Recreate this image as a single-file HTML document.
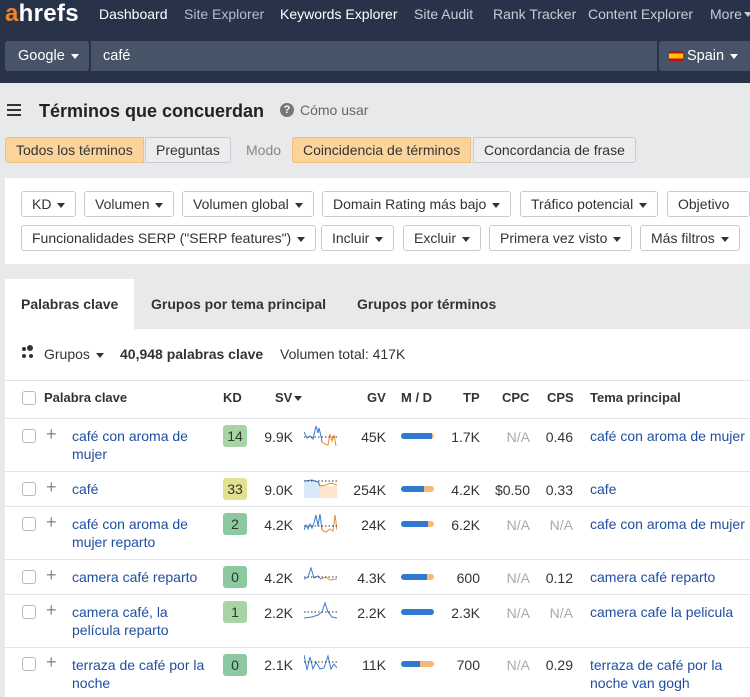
<!DOCTYPE html>
<html><head><meta charset="utf-8"><style>
*{box-sizing:border-box;margin:0;padding:0}
body{width:750px;height:697px;overflow:hidden;background:#e8e9eb;font-family:"Liberation Sans",Arial,sans-serif;font-size:14px;color:#333;position:relative}
.a{position:absolute;white-space:nowrap}
.nav{position:absolute;left:0;top:0;width:750px;height:83px;background:#283349}
.nav span{position:absolute;top:6px;font-size:14px;color:#fff}
.sb{position:absolute;top:41px;height:30px;background:#475366;border-radius:3px}
.btn{position:absolute;height:26px;border:1px solid #c9cbcf;border-radius:3px;background:#fff;font-size:14px;line-height:24px;padding:0 10px;color:#333}
.car{display:inline-block;width:0;height:0;border-left:4px solid transparent;border-right:4px solid transparent;border-top:5px solid #333;vertical-align:middle;margin-left:6px}
.seg{position:absolute;top:137px;height:26px;line-height:24px;border:1px solid #c9cbcf;padding:0 10px;font-size:14px}
.on{background:#fbd49c;border-color:#f0bf7a}
.off{background:#ececee}
.hl{position:absolute;left:5px;width:745px;height:1px;background:#e3e4e6}
.cb{position:absolute;left:22px;width:14px;height:14px;border:1px solid #bbb;border-radius:3px;background:#fff}
.pl{position:absolute;left:46px;font-size:18px;color:#888;font-weight:300}
.kw{position:absolute;left:72px;color:#1f4fa0;font-size:14px;line-height:18px}
.kd{position:absolute;left:223px;width:24px;height:22px;border-radius:3px;text-align:center;line-height:22px;font-size:14px}
.n{position:absolute;font-size:14px;text-align:right}
.md{position:absolute;left:401px;width:33px;height:6px;border-radius:3px;background:#f7b97a;overflow:hidden}
.md i{display:block;height:6px;background:#2f79d0}
.na{color:#aaa}
.h{font-weight:bold;font-size:13px;position:absolute;top:390px}
</style></head><body>
<div class="nav">
<span style="left:5px;top:0px;font-size:24px;font-weight:bold;letter-spacing:0.3px"><span style="position:static;color:#f58220;font-size:24px">a</span>hrefs</span>
<span style="left:99px">Dashboard</span>
<span style="left:184px;color:#b7bdc8">Site Explorer</span>
<span style="left:280px">Keywords Explorer</span>
<span style="left:414px;color:#c8ccd4">Site Audit</span>
<span style="left:493px;color:#c8ccd4">Rank Tracker</span>
<span style="left:588px;color:#c8ccd4">Content Explorer</span>
<span style="left:710px;color:#c8ccd4">More <span class="car" style="border-top-color:#c8ccd4;margin-left:2px"></span></span>
</div>
<div class="sb" style="left:5px;width:84px"></div>
<div class="sb" style="left:91px;width:566px;border-radius:0"></div>
<div class="sb" style="left:659px;width:91px;border-radius:3px 0 0 3px"></div>
<div class="a" style="left:18px;top:48px;color:#fff;font-size:14.5px">Google<span class="car" style="border-top-color:#fff"></span></div>
<div class="a" style="left:103px;top:48px;color:#fff;font-size:14.5px">café</div>
<div class="a" style="left:669px;top:48px;color:#fff;font-size:14.5px"><span style="display:inline-block;width:14px;height:10px;background:linear-gradient(#c60b1e 25%,#ffc400 25% 75%,#c60b1e 75%);vertical-align:-1px;margin-right:4px"></span>Spain<span class="car" style="border-top-color:#fff"></span></div>

<div class="a" style="left:7px;top:104px;width:14px;height:2px;background:#333;box-shadow:0 5px 0 #333,0 10px 0 #333"></div>
<div class="a" style="left:39px;top:101px;font-size:18px;font-weight:bold;color:#222">Términos que concuerdan</div>
<div class="a" style="left:280px;top:103px;width:14px;height:14px;border-radius:50%;background:#777;color:#fff;font-size:11px;font-weight:bold;text-align:center;line-height:14px">?</div>
<div class="a" style="left:300px;top:102px;color:#666;font-size:14px">Cómo usar</div>

<div class="seg on" style="left:5px;border-radius:3px 0 0 3px">Todos los términos</div>
<div class="seg off" style="left:145px;border-radius:0 3px 3px 0">Preguntas</div>
<div class="a" style="left:246px;top:142px;color:#888">Modo</div>
<div class="seg on" style="left:292px;border-radius:3px 0 0 3px">Coincidencia de términos</div>
<div class="seg off" style="left:473px;border-radius:0 3px 3px 0">Concordancia de frase</div>

<div class="a" style="left:5px;top:178px;width:745px;height:86px;background:#fff"></div>
<div class="btn" style="left:21px;top:191px">KD<span class="car"></span></div>
<div class="btn" style="left:84px;top:191px">Volumen<span class="car"></span></div>
<div class="btn" style="left:182px;top:191px">Volumen global<span class="car"></span></div>
<div class="btn" style="left:322px;top:191px">Domain Rating más bajo<span class="car"></span></div>
<div class="btn" style="left:520px;top:191px">Tráfico potencial<span class="car"></span></div>
<div class="btn" style="left:667px;top:191px">Objetivo<span class="car"></span></div>
<div class="btn" style="left:21px;top:225px">Funcionalidades SERP ("SERP features")<span class="car"></span></div>
<div class="btn" style="left:321px;top:225px">Incluir<span class="car"></span></div>
<div class="btn" style="left:403px;top:225px">Excluir<span class="car"></span></div>
<div class="btn" style="left:489px;top:225px">Primera vez visto<span class="car"></span></div>
<div class="btn" style="left:640px;top:225px">Más filtros<span class="car"></span></div>

<div class="a" style="left:5px;top:279px;width:129px;height:51px;background:#fff"></div>
<div class="a" style="left:5px;top:329px;width:745px;height:368px;background:#fff"></div>
<div class="a" style="left:21px;top:296px;font-weight:bold">Palabras clave</div>
<div class="a" style="left:151px;top:296px;font-weight:bold">Grupos por tema principal</div>
<div class="a" style="left:357px;top:296px;font-weight:bold">Grupos por términos</div>

<div class="a" style="left:22px;top:347px;width:4px;height:4px;border-radius:50%;background:#333;box-shadow:6px -1px 0 1px #333,0 7px 0 #333,7px 7px 0 #333"></div>
<div class="a" style="left:44px;top:346px">Grupos<span class="car"></span></div>
<div class="a" style="left:120px;top:346px;font-weight:bold">40,948 palabras clave</div>
<div class="a" style="left:280px;top:346px">Volumen total: 417K</div>

<div class="hl" style="top:380px"></div>
<div class="cb" style="top:391px"></div>
<div class="h" style="left:44px">Palabra clave</div>
<div class="h" style="left:223px">KD</div>
<div class="h" style="left:275px">SV<span class="car" style="margin-left:2px"></span></div>
<div class="h" style="left:367px">GV</div>
<div class="h" style="left:401px">M / D</div>
<div class="h" style="left:463px">TP</div>
<div class="h" style="left:502px">CPC</div>
<div class="h" style="left:547px">CPS</div>
<div class="h" style="left:590px">Tema principal</div>
<div class="hl" style="top:418px"></div>

<div class="cb" style="top:429px"></div><div class="pl" style="top:424px">+</div>
<div class="kw" style="top:427px">café con aroma de<br>mujer</div>
<div class="kd" style="top:425px;background:#a7d4a5">14</div>
<div class="n" style="left:255px;width:38px;top:429px">9.9K</div>
<svg class="a" style="left:304px;top:424px" width="33" height="22"><path d="M0 8 L3 14 L6 12 L9 15 L12 2 L14 9 L15 4 L17 12 L18 18" stroke="#3a7bd5" fill="none"/><path d="M18 18 L21 20 L24 21 L26 10 L28 17 L30 11 L32 22" stroke="#f08a24" fill="none"/><path d="M0 13 H33" stroke="#333" stroke-dasharray="1.5 2"/></svg>
<div class="n" style="left:340px;width:46px;top:429px">45K</div>
<div class="md" style="top:433px"><i style="width:31px"></i></div>
<div class="n" style="left:440px;width:40px;top:429px">1.7K</div>
<div class="n na" style="left:490px;width:40px;top:429px">N/A</div>
<div class="n" style="left:535px;width:38px;top:429px">0.46</div>
<div class="kw" style="left:590px;top:427px">café con aroma de mujer</div>
<div class="hl" style="top:471px"></div>

<div class="cb" style="top:482px"></div><div class="pl" style="top:477px">+</div>
<div class="kw" style="top:480px">café</div>
<div class="kd" style="top:478px;background:#e3e190">33</div>
<div class="n" style="left:255px;width:38px;top:482px">9.0K</div>
<svg class="a" style="left:304px;top:478px" width="33" height="20"><rect x="0" y="3" width="16" height="17" fill="#dbe8f8"/><rect x="16" y="8" width="17" height="12" fill="#fde5cf"/><path d="M0 3 L8 2 L14 4 L16 8" stroke="#3a7bd5" fill="none"/><path d="M16 8 L22 7 L27 5 L33 7" stroke="#f08a24" fill="none"/><path d="M0 3 H33" stroke="#333" stroke-dasharray="1.5 2"/></svg>
<div class="n" style="left:340px;width:46px;top:482px">254K</div>
<div class="md" style="top:486px"><i style="width:23px"></i></div>
<div class="n" style="left:440px;width:40px;top:482px">4.2K</div>
<div class="n" style="left:490px;width:40px;top:482px">$0.50</div>
<div class="n" style="left:535px;width:38px;top:482px">0.33</div>
<div class="kw" style="left:590px;top:480px">cafe</div>
<div class="hl" style="top:506px"></div>

<div class="cb" style="top:517px"></div><div class="pl" style="top:512px">+</div>
<div class="kw" style="top:515px">café con aroma de<br>mujer reparto</div>
<div class="kd" style="top:513px;background:#8cc9a0">2</div>
<div class="n" style="left:255px;width:38px;top:517px">4.2K</div>
<svg class="a" style="left:304px;top:512px" width="33" height="22"><path d="M0 18 L2 13 L4 17 L6 12 L8 16 L10 11 L12 3 L14 14 L16 2 L18 18" stroke="#3a7bd5" fill="none"/><path d="M18 18 L22 20 L26 17 L29 19 L31 3 L33 18" stroke="#f08a24" fill="none"/><path d="M0 14 H33" stroke="#333" stroke-dasharray="1.5 2"/></svg>
<div class="n" style="left:340px;width:46px;top:517px">24K</div>
<div class="md" style="top:521px"><i style="width:27px"></i></div>
<div class="n" style="left:440px;width:40px;top:517px">6.2K</div>
<div class="n na" style="left:490px;width:40px;top:517px">N/A</div>
<div class="n na" style="left:535px;width:38px;top:517px">N/A</div>
<div class="kw" style="left:590px;top:515px">cafe con aroma de mujer</div>
<div class="hl" style="top:559px"></div>

<div class="cb" style="top:570px"></div><div class="pl" style="top:565px">+</div>
<div class="kw" style="top:568px">camera café reparto</div>
<div class="kd" style="top:566px;background:#8cc9a0">0</div>
<div class="n" style="left:255px;width:38px;top:570px">4.2K</div>
<svg class="a" style="left:304px;top:565px" width="33" height="20"><path d="M0 14 L4 12 L7 3 L10 13 L14 11 L17 14" stroke="#3a7bd5" fill="none"/><path d="M17 14 L22 12 L26 15 L33 14" stroke="#f08a24" fill="none"/><path d="M0 12 H33" stroke="#333" stroke-dasharray="1.5 2"/></svg>
<div class="n" style="left:340px;width:46px;top:570px">4.3K</div>
<div class="md" style="top:574px"><i style="width:26px"></i></div>
<div class="n" style="left:440px;width:40px;top:570px">600</div>
<div class="n na" style="left:490px;width:40px;top:570px">N/A</div>
<div class="n" style="left:535px;width:38px;top:570px">0.12</div>
<div class="kw" style="left:590px;top:568px">camera café reparto</div>
<div class="hl" style="top:594px"></div>

<div class="cb" style="top:605px"></div><div class="pl" style="top:600px">+</div>
<div class="kw" style="top:603px">camera café, la<br>película reparto</div>
<div class="kd" style="top:601px;background:#a7d4a5">1</div>
<div class="n" style="left:255px;width:38px;top:605px">2.2K</div>
<svg class="a" style="left:304px;top:600px" width="33" height="22"><path d="M0 18 L8 17 L14 15 L18 12 L21 3 L24 12 L28 17 L33 18" stroke="#3a7bd5" fill="none"/><path d="M0 12 H33" stroke="#333" stroke-dasharray="1.5 2"/></svg>
<div class="n" style="left:340px;width:46px;top:605px">2.2K</div>
<div class="md" style="top:609px"><i style="width:33px"></i></div>
<div class="n" style="left:440px;width:40px;top:605px">2.3K</div>
<div class="n na" style="left:490px;width:40px;top:605px">N/A</div>
<div class="n na" style="left:535px;width:38px;top:605px">N/A</div>
<div class="kw" style="left:590px;top:603px">camera cafe la pelicula</div>
<div class="hl" style="top:647px"></div>

<div class="cb" style="top:657px"></div><div class="pl" style="top:652px">+</div>
<div class="kw" style="top:656px">terraza de café por la<br>noche</div>
<div class="kd" style="top:654px;background:#8cc9a0">0</div>
<div class="n" style="left:255px;width:38px;top:657px">2.1K</div>
<svg class="a" style="left:304px;top:652px" width="33" height="22"><path d="M0 3 L3 18 L6 5 L9 17 L12 10 L16 17 L20 16 L24 4 L27 17 L30 12 L33 16" stroke="#3a7bd5" fill="none"/><path d="M0 10 H33" stroke="#333" stroke-dasharray="1.5 2"/></svg>
<div class="n" style="left:340px;width:46px;top:657px">11K</div>
<div class="md" style="top:661px"><i style="width:19px"></i></div>
<div class="n" style="left:440px;width:40px;top:657px">700</div>
<div class="n na" style="left:490px;width:40px;top:657px">N/A</div>
<div class="n" style="left:535px;width:38px;top:657px">0.29</div>
<div class="kw" style="left:590px;top:656px">terraza de café por la<br>noche van gogh</div>
</body></html>
